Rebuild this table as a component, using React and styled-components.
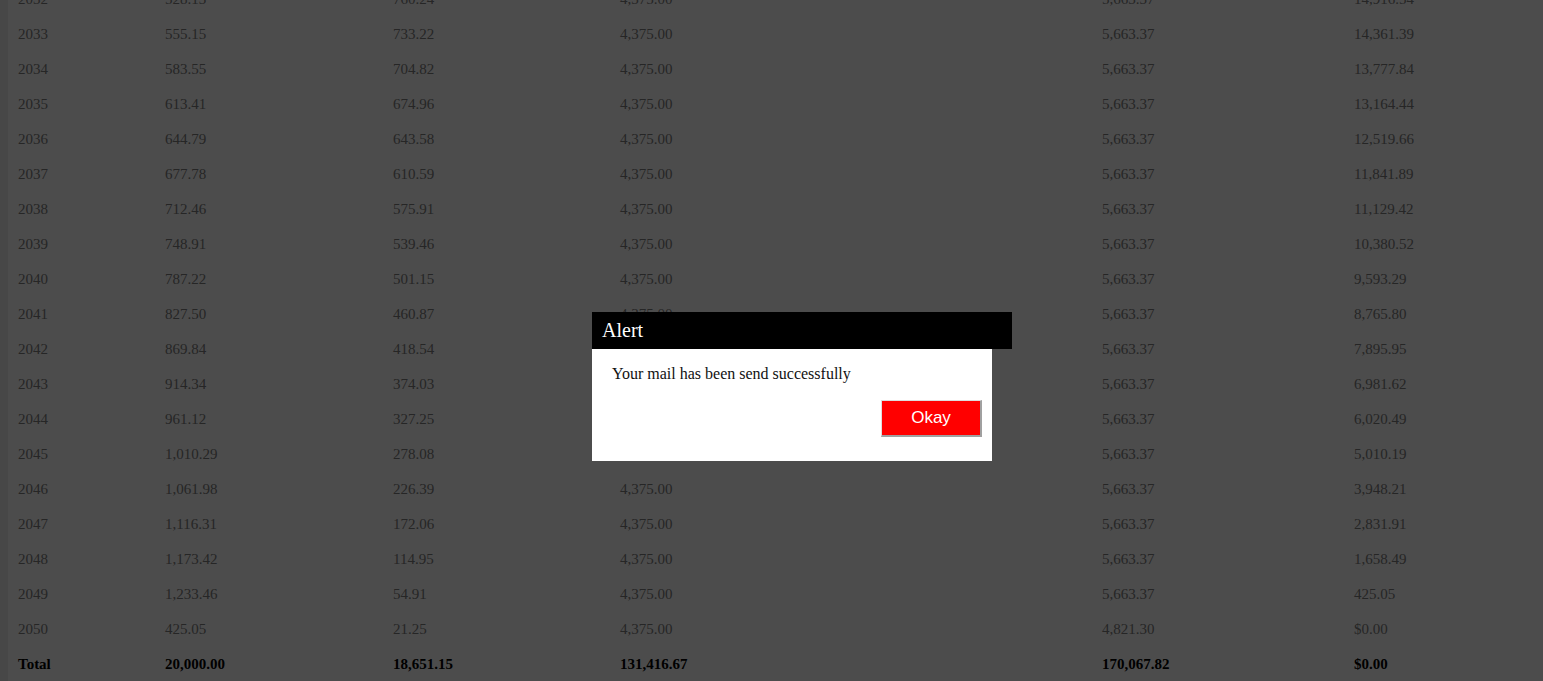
import styled, { createGlobalStyle } from "styled-components";

const GlobalStyle = createGlobalStyle`
    html, body {
        margin: 0;
        padding: 0;
        background: #eeeeee;
        overflow: hidden;
    }
    body {
        font-family: "Liberation Serif", "Times New Roman", serif;
    }
`;

const rows = [
    ["2032", "528.13", "760.24", "4,375.00", "5,663.37", "14,916.54"],
    ["2033", "555.15", "733.22", "4,375.00", "5,663.37", "14,361.39"],
    ["2034", "583.55", "704.82", "4,375.00", "5,663.37", "13,777.84"],
    ["2035", "613.41", "674.96", "4,375.00", "5,663.37", "13,164.44"],
    ["2036", "644.79", "643.58", "4,375.00", "5,663.37", "12,519.66"],
    ["2037", "677.78", "610.59", "4,375.00", "5,663.37", "11,841.89"],
    ["2038", "712.46", "575.91", "4,375.00", "5,663.37", "11,129.42"],
    ["2039", "748.91", "539.46", "4,375.00", "5,663.37", "10,380.52"],
    ["2040", "787.22", "501.15", "4,375.00", "5,663.37", "9,593.29"],
    ["2041", "827.50", "460.87", "4,375.00", "5,663.37", "8,765.80"],
    ["2042", "869.84", "418.54", "4,375.00", "5,663.37", "7,895.95"],
    ["2043", "914.34", "374.03", "4,375.00", "5,663.37", "6,981.62"],
    ["2044", "961.12", "327.25", "4,375.00", "5,663.37", "6,020.49"],
    ["2045", "1,010.29", "278.08", "4,375.00", "5,663.37", "5,010.19"],
    ["2046", "1,061.98", "226.39", "4,375.00", "5,663.37", "3,948.21"],
    ["2047", "1,116.31", "172.06", "4,375.00", "5,663.37", "2,831.91"],
    ["2048", "1,173.42", "114.95", "4,375.00", "5,663.37", "1,658.49"],
    ["2049", "1,233.46", "54.91", "4,375.00", "5,663.37", "425.05"],
    ["2050", "425.05", "21.25", "4,375.00", "4,821.30", "$0.00"],
];

const total = ["Total", "20,000.00", "18,651.15", "131,416.67", "170,067.82", "$0.00"];

const App = () => {
    return (
        <>
            <GlobalStyle />
            <Page>
                <Schedule>
                    {rows.map((row, index) => (
                        <Row key={index}>
                            <Cell>{row[0]}</Cell>
                            <Cell>{row[1]}</Cell>
                            <Cell>{row[2]}</Cell>
                            <Cell>{row[3]}</Cell>
                            <Cell />
                            <Cell>{row[4]}</Cell>
                            <Cell>{row[5]}</Cell>
                        </Row>
                    ))}
                    <Row>
                        <Cell $bold>{total[0]}</Cell>
                        <Cell $bold>{total[1]}</Cell>
                        <Cell $bold>{total[2]}</Cell>
                        <Cell $bold>{total[3]}</Cell>
                        <Cell />
                        <Cell $bold>{total[4]}</Cell>
                        <Cell $bold>{total[5]}</Cell>
                    </Row>
                </Schedule>
            </Page>

            <Overlay>
                <AlertBox>
                    <AlertHead>Alert</AlertHead>
                    <AlertBody>
                        <AlertText>Your mail has been send successfully</AlertText>
                        <ButtonRow>
                            <OkayButton>Okay</OkayButton>
                        </ButtonRow>
                    </AlertBody>
                </AlertBox>
            </Overlay>
        </>
    );
};

export default App;

// 페이지 컨테이너
const Page = styled.div`
    margin-left: 8px;
    background: #ffffff;
    height: 681px;
    overflow: hidden;
`;

// 상환 스케줄 표
const Schedule = styled.div`
    margin-top: -18px;
    padding-left: 10px;
`;

const Row = styled.div`
    display: grid;
    grid-template-columns: 147px 228px 227px 241px 241px 252px 1fr;
    height: 35px;
    align-items: center;
`;

const Cell = styled.div`
    font-size: 15px;
    color: ${(props) => (props.$bold ? "#000000" : "#808080")};
    font-weight: ${(props) => (props.$bold ? "bold" : "normal")};
    white-space: nowrap;
`;

// 알림창
const Overlay = styled.div`
    position: fixed;
    inset: 0;
    background: rgba(0, 0, 0, 0.7);
`;

const AlertBox = styled.div`
    position: absolute;
    left: 592px;
    top: 312px;
    width: 400px;
    background: #ffffff;
`;

const AlertHead = styled.div`
    width: 100%;
    height: 37px;
    padding: 0 10px;
    background: #000000;
    color: #ffffff;
    font-size: 20px;
    line-height: 37px;
`;

const AlertBody = styled.div`
    padding: 16px 10px 24px 20px;
`;

const AlertText = styled.div`
    font-size: 16px;
    color: #111111;
    line-height: 18px;
`;

const ButtonRow = styled.div`
    display: flex;
    justify-content: flex-end;
    margin-top: 17px;
`;

const OkayButton = styled.button`
    width: 101px;
    height: 37px;
    background: #ff0000;
    color: #ffffff;
    font-family: "Liberation Sans", Arial, sans-serif;
    font-size: 17px;
    border-style: solid;
    border-width: 1px 2px 2px 1px;
    border-color: #dddddd #a0a0a0 #a0a0a0 #dddddd;
    padding: 0;
    cursor: pointer;
`;
